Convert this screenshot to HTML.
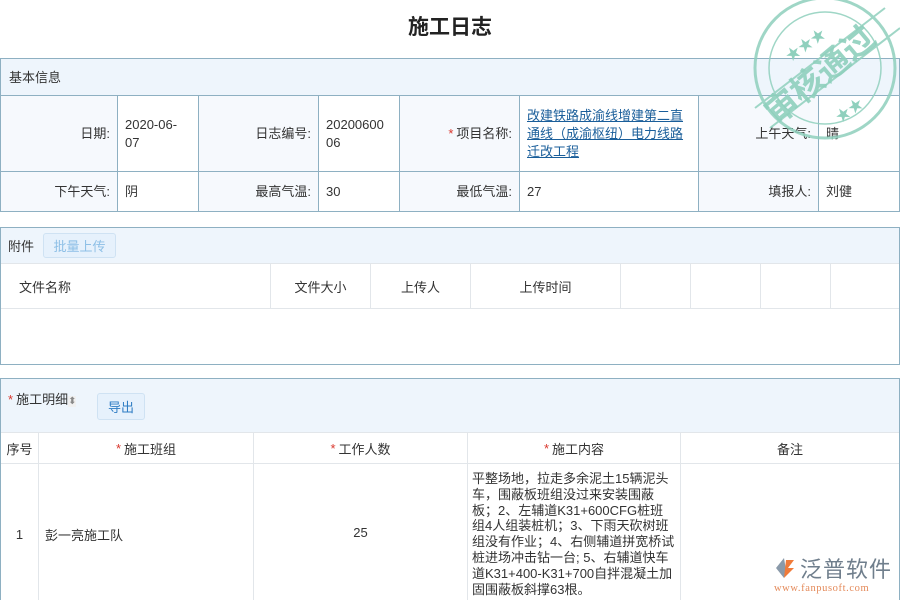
<!DOCTYPE html>
<html style="overflow:hidden;width:900px;height:600px"><head><meta charset="utf-8"><style>
*{margin:0;padding:0;box-sizing:border-box}
body{width:900px;height:600px;overflow:hidden;background:#fff;font-family:"Liberation Sans","Noto Sans CJK SC",sans-serif;font-size:13px;color:#333;position:relative}
.a{position:absolute}
.box{position:absolute;border:1px solid #8eb0c2;left:0;width:900px}
.hd{background:#eef5fc}
.c{position:absolute;border-right:1px solid #8eb0c2;border-bottom:1px solid #8eb0c2;display:flex;align-items:center;padding:0 7px;line-height:18px}
.l{background:#f6f9fd;justify-content:flex-end}
.g{position:absolute;border-right:1px solid #e2e6ea;border-bottom:1px solid #e2e6ea;display:flex;align-items:center;justify-content:center}
.r{color:#d9362c;margin-right:3px}
.btn{position:absolute;border:1px solid #cfe2f3;background:#e6f1fc;border-radius:3px;display:flex;align-items:center;justify-content:center}
</style></head><body>
<div class="a" style="left:0;width:900px;top:11px;text-align:center;font-size:21px;font-weight:bold;color:#222">施工日志</div>

<div class="box" style="top:58px;height:154px">
<div class="a hd" style="left:0;top:0;width:898px;height:37px;border-bottom:1px solid #8eb0c2;padding:8px 8px">基本信息</div>
<div class="c l" style="left:0;top:37px;width:117px;height:76px">日期:</div>
<div class="c" style="left:117px;top:37px;width:81px;height:76px">2020-06-07</div>
<div class="c l" style="left:198px;top:37px;width:120px;height:76px">日志编号:</div>
<div class="c" style="left:318px;top:37px;width:81px;height:76px;word-break:break-all;padding-right:12px">2020060006</div>
<div class="c l" style="left:399px;top:37px;width:120px;height:76px"><span class="r">*</span>项目名称:</div>
<div class="c" style="left:519px;top:37px;width:179px;height:76px;color:#1a5e9a;text-decoration:underline">改建铁路成渝线增建第二直通线（成渝枢纽）电力线路迁改工程</div>
<div class="c l" style="left:698px;top:37px;width:120px;height:76px">上午天气:</div>
<div class="c" style="left:818px;top:37px;width:80px;height:76px;border-right:0">晴</div>
<div class="c l" style="left:0;top:113px;width:117px;height:39px;border-bottom:0">下午天气:</div>
<div class="c" style="left:117px;top:113px;width:81px;height:39px;border-bottom:0">阴</div>
<div class="c l" style="left:198px;top:113px;width:120px;height:39px;border-bottom:0">最高气温:</div>
<div class="c" style="left:318px;top:113px;width:81px;height:39px;border-bottom:0">30</div>
<div class="c l" style="left:399px;top:113px;width:120px;height:39px;border-bottom:0">最低气温:</div>
<div class="c" style="left:519px;top:113px;width:179px;height:39px;border-bottom:0">27</div>
<div class="c l" style="left:698px;top:113px;width:120px;height:39px;border-bottom:0">填报人:</div>
<div class="c" style="left:818px;top:113px;width:80px;height:39px;border:0">刘健</div>
</div>

<div class="box" style="top:227px;height:138px">
<div class="a hd" style="left:0;top:0;width:898px;height:36px;border-bottom:1px solid #e2e6ea;padding:8px 7px">附件</div>
<div class="btn" style="left:42px;top:5px;width:73px;height:25px;color:#8dbfe6">批量上传</div>
<div class="g" style="left:0;top:36px;width:270px;height:45px;justify-content:flex-start;padding-left:18px">文件名称</div>
<div class="g" style="left:270px;top:36px;width:100px;height:45px">文件大小</div>
<div class="g" style="left:370px;top:36px;width:100px;height:45px">上传人</div>
<div class="g" style="left:470px;top:36px;width:150px;height:45px">上传时间</div>
<div class="g" style="left:620px;top:36px;width:70px;height:45px"></div>
<div class="g" style="left:690px;top:36px;width:70px;height:45px"></div>
<div class="g" style="left:760px;top:36px;width:70px;height:45px"></div>
<div class="g" style="left:830px;top:36px;width:68px;height:45px;border-right:0"></div>
</div>

<div class="box" style="top:378px;height:222px;border-bottom:0;overflow:hidden">
<div class="a hd" style="left:0;top:0;width:898px;height:54px;border-bottom:1px solid #e2e6ea;padding:10px 7px"><span class="r">*</span>施工明细<span style="color:#888;font-size:10px;background:#f0f0f0">⬍</span></div>
<div class="btn" style="left:96px;top:14px;width:48px;height:27px;color:#2f7dc4">导出</div>
<div class="g" style="left:0;top:54px;width:38px;height:31px">序号</div>
<div class="g" style="left:38px;top:54px;width:215px;height:31px"><span class="r">*</span>施工班组</div>
<div class="g" style="left:253px;top:54px;width:214px;height:31px"><span class="r">*</span>工作人数</div>
<div class="g" style="left:467px;top:54px;width:213px;height:31px"><span class="r">*</span>施工内容</div>
<div class="g" style="left:680px;top:54px;width:218px;height:31px;border-right:0">备注</div>
<div class="g" style="left:0;top:85px;width:38px;height:160px;padding-bottom:18px">1</div>
<div class="g" style="left:38px;top:85px;width:215px;height:160px;justify-content:flex-start;padding-left:6px;padding-bottom:18px">彭一亮施工队</div>
<div class="g" style="left:253px;top:85px;width:214px;height:160px;padding-bottom:22px">25</div>
<div class="g" style="left:467px;top:85px;width:213px;height:160px;align-items:flex-start;justify-content:flex-start;padding:7px 4px;line-height:15.8px">平整场地，拉走多余泥土15辆泥头车，围蔽板班组没过来安装围蔽板；2、左辅道K31+600CFG桩班组4人组装桩机；3、下雨天砍树班组没有作业；4、右侧辅道拼宽桥试桩进场冲击钻一台; 5、右辅道快车道K31+400-K31+700自拌混凝土加固围蔽板斜撑63根。</div>
<div class="g" style="left:680px;top:85px;width:218px;height:160px;border-right:0"></div>
</div>

<svg class="a" style="left:745px;top:0" width="155" height="150" viewBox="0 0 155 150">
<g fill="none" stroke="#8fd0bd" stroke-width="3" opacity="0.85">
<circle cx="80" cy="68" r="70"/><circle cx="80" cy="68" r="56" stroke-width="1.5"/>
<line x1="10" y1="108" x2="140" y2="8" stroke-width="2"/><line x1="25" y1="128" x2="155" y2="28" stroke-width="2"/>
</g>
<text x="0" y="0" transform="translate(32,126) rotate(-40)" font-size="33" font-weight="bold" fill="#8fd0bd" font-family="Noto Sans CJK SC,sans-serif" opacity="0.9">审核通过</text>
<text x="0" y="0" transform="translate(45,62) rotate(-35)" font-size="15" fill="#8fd0bd">★★★</text>
<text x="0" y="0" transform="translate(95,123) rotate(-35)" font-size="15" fill="#8fd0bd">★★</text>
</svg>

<div class="a" style="left:770px;top:552px;width:130px;height:48px">
<svg class="a" style="left:2px;top:4px" width="24" height="24" viewBox="0 0 24 24"><path d="M12 2 L4 12 L12 22 L14 14 Z" fill="#8a9aaa"/><path d="M14 4 L22 4 L16 12 L22 12 L12 22 Z" fill="#f07b3a"/></svg>
<div class="a" style="left:30px;top:0;font-size:22px;color:#6f7e8c;letter-spacing:1px">泛普软件</div>
<div class="a" style="left:4px;top:31px;font-size:10.5px;color:#e48a5a;font-family:'Liberation Serif',serif;letter-spacing:0.6px">www.fanpusoft.com</div>
</div>
</body></html>
